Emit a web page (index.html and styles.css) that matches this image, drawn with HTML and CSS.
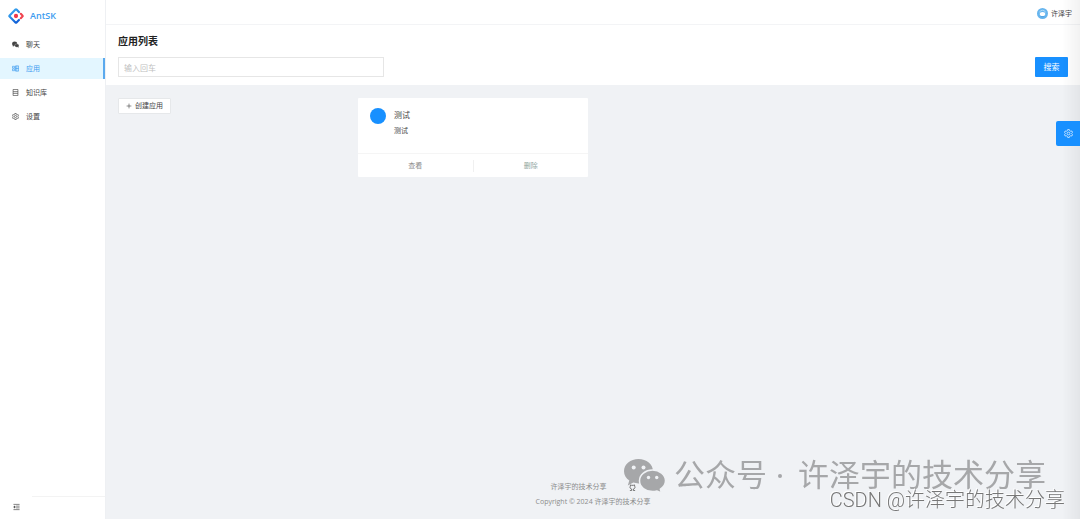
FILE: index.html
```html
<!DOCTYPE html>
<html lang="zh-CN">
  <head>
    <meta charset="utf-8" />
    <meta name="viewport" content="width=device-width, initial-scale=1" />
    <title>AntSK - 应用列表</title>
    <link rel="stylesheet" href="styles.css">
  </head>
  <body>
    <div class="layout">
      <!-- Sidebar -->
      <aside class="sider">
        <a class="logo" href="#">
          <svg viewBox="1 1 30 30" aria-hidden="true">
            <defs>
              <linearGradient id="logo-blue" x1="0" y1="0" x2="0.6" y2="1">
                <stop offset="0" stop-color="#3fb4f5" />
                <stop offset="1" stop-color="#1262d8" />
              </linearGradient>
            </defs>
            <g fill="none" stroke-width="4" stroke-linecap="round" stroke-linejoin="round">
              <path d="M21.5 8.5 L17 4 Q16 3 15 4 L4 15 Q3 16 4 17 L15 28 Q16 29 17 28 L21.5 23.5" stroke="url(#logo-blue)" />
              <path d="M25 12 L28 15 Q29 16 28 17 L25 20" stroke="#f0444f" />
            </g>
            <circle cx="16" cy="16" r="4" fill="#f0384a" />
          </svg>
          <span>AntSK</span>
        </a>
        <nav class="menu">
          <a class="menu-item" href="#">
            <svg viewBox="0 0 16 16" fill="currentColor" aria-hidden="true">
              <ellipse cx="6" cy="6" rx="6" ry="5" />
              <path d="M2 9 L2 13 L6 10 Z" />
              <ellipse cx="11" cy="10.5" rx="5" ry="4" stroke="#fff" stroke-width="0.7" />
              <path d="M12 13 L15 15.5 L15 12 Z" />
            </svg>
            <span>聊天</span>
          </a>
          <a class="menu-item active" href="#">
            <svg viewBox="0 0 16 16" fill="none" stroke="currentColor" stroke-width="1.5" aria-hidden="true">
              <path d="M1 3 H6 V7 H1 Z M1 9 H6 V13 H1 Z M8 2 H15 V14 H8 Z M8 8 H15 M11 2 V14" />
            </svg>
            <span>应用</span>
          </a>
          <a class="menu-item" href="#">
            <svg viewBox="0 0 16 16" fill="none" stroke="currentColor" stroke-width="1.5" aria-hidden="true">
              <path d="M2.5 1 H13.5 V15 H2.5 Z M2.5 6 H13.5 M2.5 10 H13.5" />
            </svg>
            <span>知识库</span>
          </a>
          <a class="menu-item" href="#">
            <svg viewBox="0 0 16 16" fill="none" stroke="currentColor" stroke-width="1.5" aria-hidden="true">
              <path d="M6.5 1 H9.5 L10 3 L12 4 L14 3.5 L15 6 L13.5 8 L15 10 L14 12.5 L12 12 L10 13 L9.5 15 H6.5 L6 13 L4 12 L2 12.5 L1 10 L2.5 8 L1 6 L2 3.5 L4 4 L6 3 Z" />
              <circle cx="8" cy="8" r="2.5" />
            </svg>
            <span>设置</span>
          </a>
        </nav>
        <div class="sider-footer">
          <button class="collapse" type="button" aria-label="收起菜单">
            <svg viewBox="0 0 16 16" fill="none" stroke="currentColor" stroke-width="1.5" aria-hidden="true">
              <path d="M1 2 H15 M7 6 H15 M7 10 H15 M1 14 H15" />
              <path d="M4.5 5.5 L1.5 8 L4.5 10.5 Z" fill="currentColor" />
            </svg>
          </button>
        </div>
      </aside>

      <div class="main">
        <header class="header">
          <a class="user" href="#">
            <svg viewBox="0 0 24 24" aria-hidden="true">
              <circle cx="12" cy="12" r="12" fill="#67b5ee" />
              <path d="M5 9 Q12 1 19 9" fill="none" stroke="#b9dff8" stroke-width="2" />
              <ellipse cx="12" cy="13" rx="6" ry="4.5" fill="#fff" />
              <path d="M8 19 H16" stroke="#4f9fdf" stroke-width="2" />
            </svg>
            <span>许泽宇</span>
          </a>
        </header>

        <section class="page-header">
          <h1>应用列表</h1>
          <form class="search">
            <input type="text" placeholder="输入回车" aria-label="搜索应用" />
            <button type="button">搜索</button>
          </form>
        </section>

        <main class="content">
          <div class="card-list">
            <div>
              <button class="create" type="button">
                <svg viewBox="0 0 10 10" stroke="currentColor" aria-hidden="true">
                  <path d="M5 1 V9 M1 5 H9" />
                </svg>
                <span>创建应用</span>
              </button>
            </div>
            <article class="card">
              <div class="card-body">
                <span class="avatar"></span>
                <div>
                  <h2>测试</h2>
                  <p>测试</p>
                </div>
              </div>
              <div class="card-actions">
                <a href="#">查看</a>
                <a class="delete" href="#">删除</a>
              </div>
            </article>
          </div>
        </main>

        <footer class="footer">
          <div class="footer-links">
            <a href="#">许泽宇的技术分享</a>
            <a class="github" href="#" aria-label="GitHub">
              <svg viewBox="0 0 16 16" fill="none" stroke="currentColor" stroke-width="2" aria-hidden="true">
                <path d="M2 15 H6 V11.5 C2 11 1.5 7 3 5 L3.5 2 L6 3 H10 L12.5 2 L13 5 C14.5 7 14 11 10 11.5 V15 H14" />
              </svg>
            </a>
          </div>
          <div>Copyright © 2024 许泽宇的技术分享</div>
        </footer>
      </div>
    </div>

    <div class="edge-shadow"></div>
    <button class="setting-handle" type="button" aria-label="主题设置">
      <svg viewBox="0 0 16 16" fill="none" stroke="currentColor" stroke-width="1.2" aria-hidden="true">
        <path d="M6.5 1 H9.5 L10 3 L12 4 L14 3.5 L15 6 L13.5 8 L15 10 L14 12.5 L12 12 L10 13 L9.5 15 H6.5 L6 13 L4 12 L2 12.5 L1 10 L2.5 8 L1 6 L2 3.5 L4 4 L6 3 Z" />
        <circle cx="8" cy="8" r="2.5" />
      </svg>
    </button>

    <!-- Watermarks -->
    <div class="watermark watermark-wechat">
      <svg viewBox="0 0 42 36" aria-hidden="true">
        <path d="M14.5 1 C6.5 1 0 6.2 0 13.2 C0 17 2 20.3 5.3 22.5 L3.8 27.500 L9.3 24.6 C11 25.1 12.7 25.4 14.5 25.4 C22.5 25.4 29 20 29 13.2 C29 6.2 22.5 1 14.5 1 Z" fill="#a6a7a9" />
        <path d="M28.5 12 C21.5 12 15.5 16.6 15.5 22.8 C15.5 29 21.5 33.6 28.5 33.6 C30 33.6 31.5 33.4 33 33 L37.5 35 L36.4 31.2 C39.4 29.2 41.5 26.2 41.5 22.8 C41.5 16.6 35.5 12 28.5 12 Z" fill="#a6a7a9" stroke="#f0f2f5" stroke-width="1.5" />
        <g fill="#f0f2f5">
          <circle cx="9.7" cy="9.5" r="2" />
          <circle cx="19.5" cy="9.5" r="2" />
          <circle cx="24.5" cy="19.5" r="1.7" />
          <circle cx="32.7" cy="19.5" r="1.7" />
        </g>
      </svg>
      <span>公众号</span>
      <span class="dot"></span>
      <span>许泽宇的技术分享</span>
    </div>
    <div class="watermark watermark-csdn">CSDN @许泽宇的技术分享</div>
  </body>
</html>
```
FILE: styles.css
```css
* {
  margin: 0;
  padding: 0;
  box-sizing: border-box;
}

body {
  font-family: 'Open Sans', 'Noto Sans CJK SC', sans-serif;
  font-size: 7px;
  line-height: 12px;
  color: #444;
  background: #f0f2f5;
}

a {
  color: inherit;
  text-decoration: none;
}

button,
input {
  font: inherit;
  color: inherit;
}

button {
  cursor: pointer;
}

svg {
  display: block;
  flex: none;
}

.layout {
  display: flex;
  min-height: 100vh;
}

/* Sidebar */
.sider {
  display: flex;
  flex-direction: column;
  flex: none;
  width: 106px;
  background: #fff;
  border-right: 1px solid #eef0f3;
}

.logo {
  display: flex;
  align-items: center;
  gap: 6px;
  height: 32px;
  padding-left: 8px;
  font-size: 9px;
  font-weight: 600;
  color: #3d9cf0;
}

.logo svg {
  width: 16px;
  height: 16px;
}

.menu {
  display: flex;
  flex: 1;
  flex-direction: column;
  gap: 3px;
  padding-top: 2px;
}

.menu-item {
  display: flex;
  align-items: center;
  gap: 7px;
  height: 21px;
  padding-left: 12px;
  border-right: 2px solid transparent;
}

.menu-item svg {
  width: 7px;
  height: 7px;
}

.menu-item.active {
  color: #3d9cf0;
  background: #e3f6ff;
  border-right-color: #5aa9ee;
}

.sider-footer {
  padding: 0 0 6px 12px;
}

.sider-footer::before {
  content: '';
  display: block;
  margin: 0 0 4px 20px;
  border-top: 1px solid #f3f3f3;
}

.collapse {
  display: block;
  padding: 1px;
  background: none;
  border: 0;
}

.collapse svg {
  width: 7px;
  height: 10px;
}

/* Header */
.main {
  display: flex;
  flex: 1;
  flex-direction: column;
  min-width: 0;
}

.header {
  display: flex;
  align-items: center;
  justify-content: flex-end;
  height: 25px;
  padding: 3px 8px 0;
  background: #fff;
  border-bottom: 1px solid #f3f4f6;
}

.user {
  display: flex;
  align-items: center;
  gap: 3px;
}

.user svg {
  width: 11px;
  height: 11px;
}

.page-header {
  padding: 8px 12px;
  background: #fff;
}

.page-header h1 {
  margin-bottom: 8px;
  font-size: 10px;
  line-height: 16px;
  color: #222;
}

.search {
  display: flex;
  justify-content: space-between;
}

.search input {
  width: 28%;
  height: 20px;
  padding: 0 5px;
  font-size: 8px;
  background: #fff;
  border: 1px solid #e6e6e6;
}

.search input::placeholder {
  color: #bfbfbf;
}

.search button {
  width: 33px;
  height: 20px;
  font-size: 8px;
  color: #fff;
  background: #1890ff;
  border: 0;
  border-radius: 1px;
}

/* Cards */
.content {
  flex: 1;
  padding: 13px 12px;
}

.card-list {
  display: grid;
  grid-template-columns: repeat(4, 1fr);
  align-items: start;
  gap: 10px;
}

.create {
  display: flex;
  align-items: center;
  gap: 3px;
  height: 16px;
  padding: 0 7px;
  background: #fff;
  border: 1px solid #e6e8ea;
  border-radius: 1px;
}

.create svg {
  width: 6px;
  height: 6px;
}

.card {
  background: #fff;
  border-radius: 1px;
}

.card-body {
  display: flex;
  gap: 8px;
  min-height: 55px;
  padding: 10px 12px;
}

.avatar {
  flex: none;
  width: 16px;
  height: 16px;
  background: #1890ff;
  border-radius: 50%;
}

.card-body h2 {
  margin-bottom: 4px;
  font-size: 8px;
  font-weight: 400;
  line-height: 13px;
}

.card-actions {
  display: flex;
  padding: 6px 0 5px;
  color: #8c8c8c;
  border-top: 1px solid #f5f5f5;
}

.card-actions a {
  flex: 1;
  text-align: center;
}

.card-actions .delete {
  color: #8fa69f;
  border-left: 1px solid #f0f0f0;
}

/* Footer */
.footer {
  padding: 0 12px 11px;
  color: #8c8c8c;
  text-align: center;
}

.footer-links {
  display: flex;
  justify-content: center;
  gap: 22px;
  margin-bottom: 3px;
}

.footer-links a {
  display: flex;
  align-items: center;
}

/* stays readable above the watermark */
.footer-links .github {
  position: relative;
  z-index: 1;
  color: #666;
}

.footer-links svg {
  width: 7px;
  height: 7px;
}

/* Theme drawer handle */
.setting-handle {
  position: fixed;
  top: 121px;
  right: 0;
  display: flex;
  align-items: center;
  justify-content: center;
  width: 24px;
  height: 25px;
  color: #fff;
  background: #1890ff;
  border: 0;
  border-radius: 2px 0 0 2px;
}

.setting-handle svg {
  width: 9px;
  height: 9px;
}

.edge-shadow {
  position: fixed;
  top: 0;
  right: 0;
  bottom: 0;
  width: 18px;
  background: linear-gradient(to right, rgba(0, 0, 0, 0), rgba(0, 0, 0, 0.05));
  pointer-events: none;
}

/* Watermarks */
.watermark {
  position: fixed;
  display: flex;
  align-items: center;
  font-family: Roboto, 'Noto Sans CJK SC', sans-serif;
  white-space: nowrap;
  pointer-events: none;
}

.watermark-wechat {
  right: 34px;
  bottom: 23px;
  font-size: 31px;
  line-height: 40px;
  color: #a6a7a9;
}

.watermark-wechat svg {
  width: 42px;
  height: 36px;
  margin-right: 8px;
}

.dot {
  width: 4px;
  height: 4px;
  margin: 0 16px 0 11px;
  background: #a6a7a9;
  border-radius: 50%;
}

.watermark-csdn {
  right: 15px;
  bottom: 7px;
  font-size: 20px;
  font-weight: 300;
  line-height: 24px;
  color: #777;
  text-shadow: -1px -1px 0 #fff;
}
```
